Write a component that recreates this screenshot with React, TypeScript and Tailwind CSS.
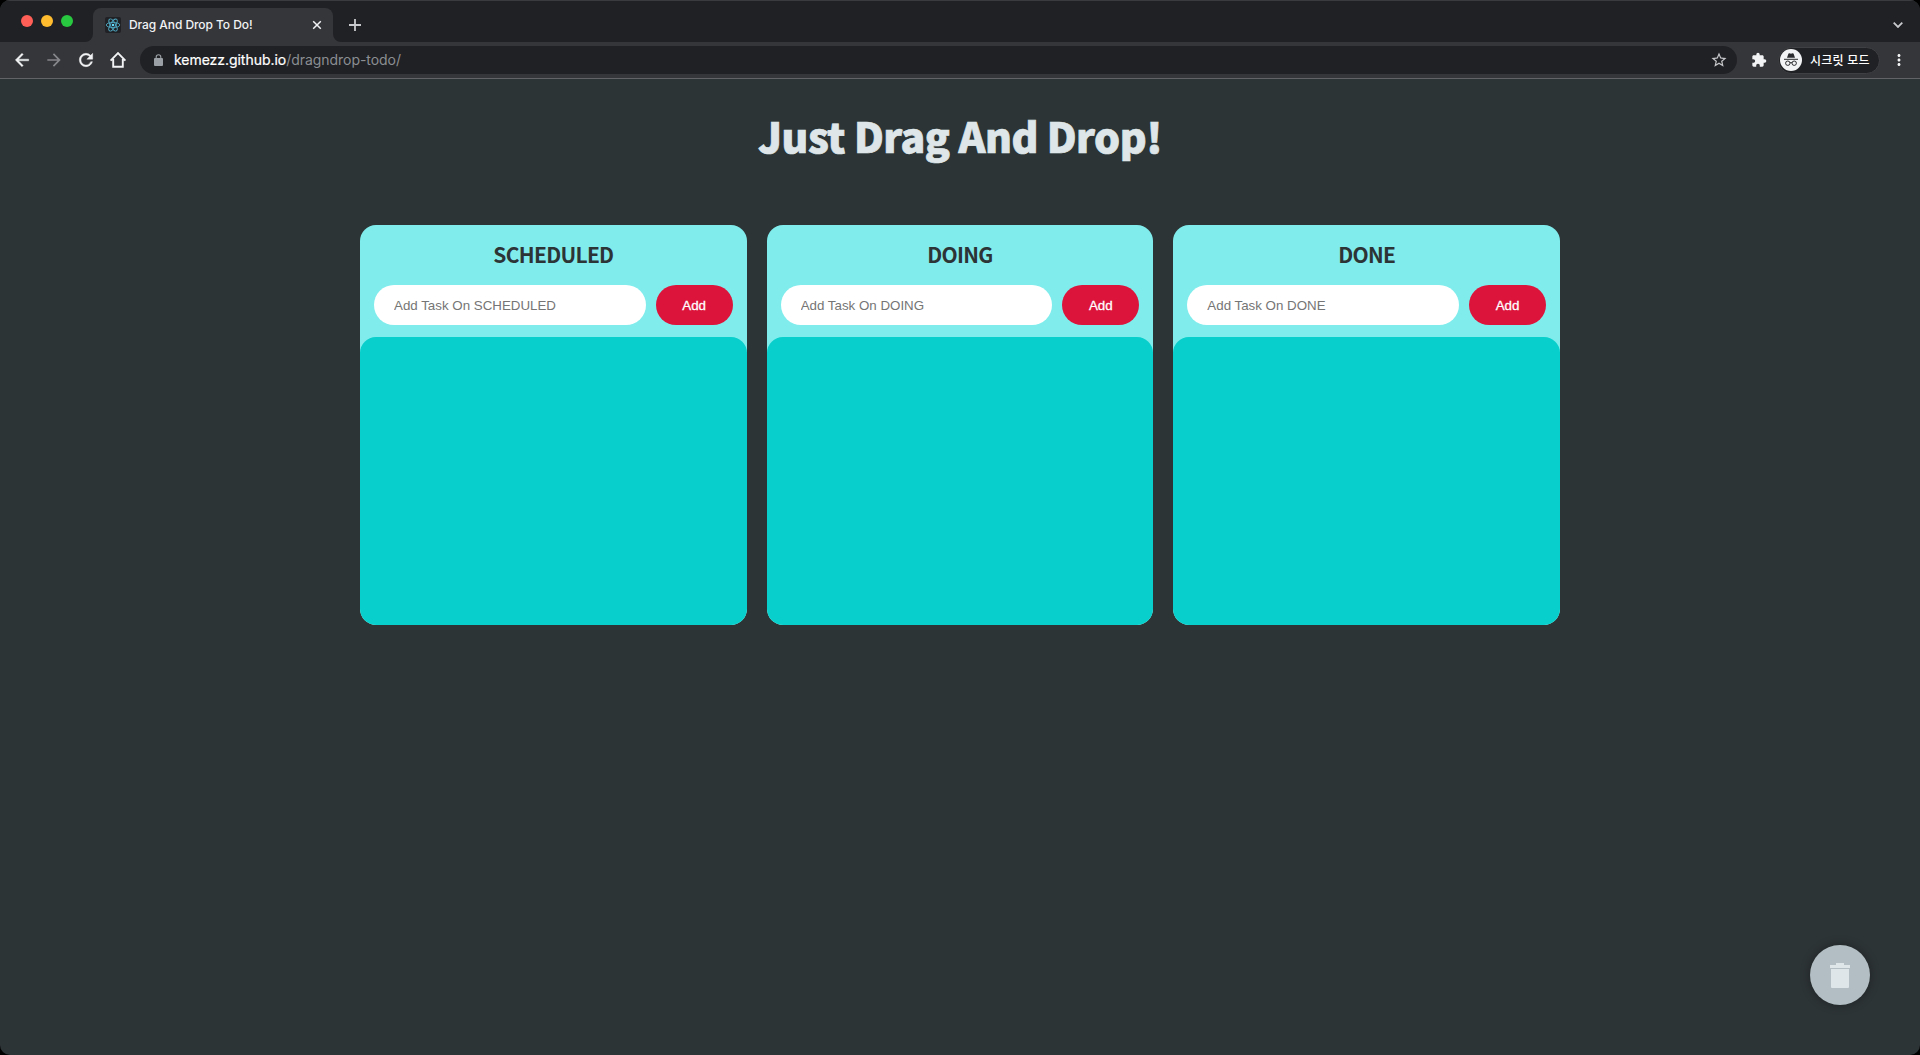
import { MdArrowBack, MdArrowForward, MdRefresh, MdStarBorder, MdExtension, MdMoreVert } from "react-icons/md";

function ReactFavicon() {
  return (
    <svg viewBox="0 0 16 16" className="size-4 shrink-0 rounded-[2px] bg-[#202124]" fill="none" stroke="#4fa9c4" strokeWidth="0.9">
      <ellipse cx="8" cy="8" rx="6.8" ry="2.6" />
      <ellipse cx="8" cy="8" rx="6.8" ry="2.6" transform="rotate(60 8 8)" />
      <ellipse cx="8" cy="8" rx="6.8" ry="2.6" transform="rotate(120 8 8)" />
      <circle cx="8" cy="8" r="1.3" fill="#61dafb" stroke="none" />
    </svg>
  );
}

function IncognitoBadge() {
  return (
    <svg viewBox="0 0 22 22" className="size-[22px] shrink-0">
      <circle cx="11" cy="11" r="11" fill="#f1f3f4" />
      <path d="M7 8.8 8.3 4.9Q8.6 4.1 9.4 4.3L11 4.7 12.6 4.3Q13.4 4.1 13.7 4.9L15 8.8Z" fill="#2a2b2e" />
      <path d="M4 10.3H18" stroke="#2a2b2e" strokeWidth="1" />
      <g fill="none" stroke="#2a2b2e" strokeWidth="1">
        <circle cx="7.8" cy="14.2" r="2.2" />
        <circle cx="14.2" cy="14.2" r="2.2" />
        <path d="M10 13.9Q11 13.2 12 13.9" />
      </g>
    </svg>
  );
}

function TabStrip() {
  return (
    <div className="flex h-[42px] items-end border-t border-[#3a3b3e] bg-[#202124]">
      <div className="flex h-[41px] w-[85px] items-start gap-2 pt-3.5 pl-[21px]">
        <span className="size-3 rounded-full bg-[#ff5f57]" />
        <span className="size-3 rounded-full bg-[#febc2e]" />
        <span className="size-3 rounded-full bg-[#28c840]" />
      </div>
      <svg viewBox="0 0 8 8" className="size-2 shrink-0" fill="#35363a"><path d="M8 0V8H0A8 8 0 0 0 8 0Z" /></svg>
      <div className="flex h-[34px] w-[240px] items-center rounded-t-lg bg-[#35363a] pr-[11px] pl-3">
        <ReactFavicon />
        <span className="ml-2 flex-1 text-[12px] font-medium tracking-[-0.07px] whitespace-nowrap text-[#f1f3f4]">Drag And Drop To Do!</span>
        <svg viewBox="0 0 10 10" className="size-2.5" stroke="#f1f3f4" strokeWidth="1.5"><path d="M1.2 1.2 8.8 8.8M8.8 1.2 1.2 8.8" /></svg>
      </div>
      <svg viewBox="0 0 8 8" className="size-2 shrink-0" fill="#35363a"><path d="M0 0V8H8A8 8 0 0 1 0 0Z" /></svg>
      <svg viewBox="0 0 12 12" className="mb-[11px] ml-2 size-3" stroke="#c8c9cc" strokeWidth="1.8"><path d="M6 0V12M0 6H12" /></svg>
      <svg viewBox="0 0 10 6" className="mr-[17px] mb-3.5 ml-auto h-1.5 w-2.5" fill="none" stroke="#c8c9cc" strokeWidth="1.8"><path d="M0.7 0.7 5 5 9.3 0.7" /></svg>
    </div>
  );
}

function Toolbar() {
  return (
    <div className="flex h-[37px] items-center border-b border-[#626366] bg-[#35363a]">
      <MdArrowBack className="ml-3 size-5 text-[#f1f3f4] [&>path:last-child]:stroke-[#f1f3f4] [&>path:last-child]:stroke-[0.5]" />
      <MdArrowForward className="ml-3 size-5 text-[#86878a]" />
      <MdRefresh className="ml-3 size-5 text-[#f1f3f4] [&>path:last-child]:stroke-[#f1f3f4] [&>path:last-child]:stroke-[0.5]" />
      <svg viewBox="0 0 20 20" className="ml-3 size-5" fill="none" stroke="#f1f3f4" strokeWidth="1.9">
        <path d="M2.6 10.6 10 3.2 17.4 10.6M5.2 9V16.8H14.8V9" />
      </svg>
      <div className="ml-3 flex h-7 w-[1597px] items-center rounded-full bg-[#202124] pr-[9px] pl-3.5">
        <svg viewBox="0 0 9 12" className="h-3 w-[9px]">
          <rect y="4" width="9" height="8" rx="1" fill="#9aa0a6" />
          <path d="M2.2 4.5V3A2.3 2.3 0 0 1 6.8 3V4.5" fill="none" stroke="#9aa0a6" strokeWidth="1.1" />
        </svg>
        <div className="ml-[11px] flex-1 pb-0.5 text-[14px] tracking-[-0.04px] text-[#8b8e93]">
          <span className="text-white [-webkit-text-stroke:0.2px_white]">kemezz.github.io</span>/dragndrop-todo/
        </div>
        <MdStarBorder className="size-[18px] text-[#c8c9cc]" />
      </div>
      <MdExtension className="ml-3.5 size-4 text-[#f1f3f4]" />
      <div className="ml-[11px] flex h-[27px] w-[102px] items-center rounded-full border border-[#3f4043] bg-[#202124] pl-px">
        <IncognitoBadge />
        <span className="ml-2 pt-0.5 text-[12px] font-medium tracking-[0.25px] whitespace-nowrap text-white">시크릿 모드</span>
      </div>
      <MdMoreVert className="ml-2.5 size-[18px] text-[#f1f3f4]" />
    </div>
  );
}

function Board({ name }: { name: string }) {
  return (
    <section className="flex h-[400px] flex-col overflow-hidden rounded-2xl bg-[#81ecec]">
      <h2 className="flex h-[60px] items-center justify-center font-['Noto_Sans_CJK_KR',sans-serif] text-[21px] font-bold tracking-[-0.7px] text-[#2d3436]">{name}</h2>
      <form className="flex h-10 gap-2.5 px-3.5 font-['Liberation_Sans',sans-serif]" onSubmit={(e) => e.preventDefault()}>
        <input className="min-w-0 flex-1 rounded-full bg-white px-5 pt-0.5 text-[13.33px] placeholder:text-[#757575]" placeholder={`Add Task On ${name}`} />
        <button className="w-[77px] rounded-full bg-[#dc143c] pt-0.5 text-[13.33px] text-white [-webkit-text-stroke:0.3px_white]">Add</button>
      </form>
      <div className="mt-3 flex-1 rounded-2xl bg-[#08cfcb]" />
    </section>
  );
}

export default function App() {
  return (
    <div className="h-[1055px] bg-black">
      <div className="flex h-full flex-col overflow-hidden rounded-[10px] bg-[#2d3436]">
        <header className="font-['Inter','Noto_Sans_CJK_KR',sans-serif]">
          <TabStrip />
          <Toolbar />
        </header>
        <main className="flex-1">
          <h1 className="flex h-[146px] items-center justify-center pb-8 font-['Noto_Sans_CJK_KR',sans-serif] text-[41px] font-black tracking-[-0.52px] text-[#dfe6e9] [-webkit-text-stroke:0.7px_#dfe6e9]">Just Drag And Drop!</h1>
          <div className="mx-auto grid w-[1200px] grid-cols-3 gap-5">
            <Board name="SCHEDULED" />
            <Board name="DOING" />
            <Board name="DONE" />
          </div>
        </main>
        <div className="fixed right-[50px] bottom-[50px] flex size-[60px] items-center justify-center rounded-full bg-[#b2bec3] shadow-[0_0_10px_rgba(0,0,0,0.35)]">
          <svg viewBox="0 0 20 25" className="h-[25px] w-5" fill="#dfe6e9">
            <path d="M6 0H14V2H20V5H0V2H6ZM1 6H19V24Q19 25 18 25H2Q1 25 1 24Z" />
          </svg>
        </div>
      </div>
    </div>
  );
}
